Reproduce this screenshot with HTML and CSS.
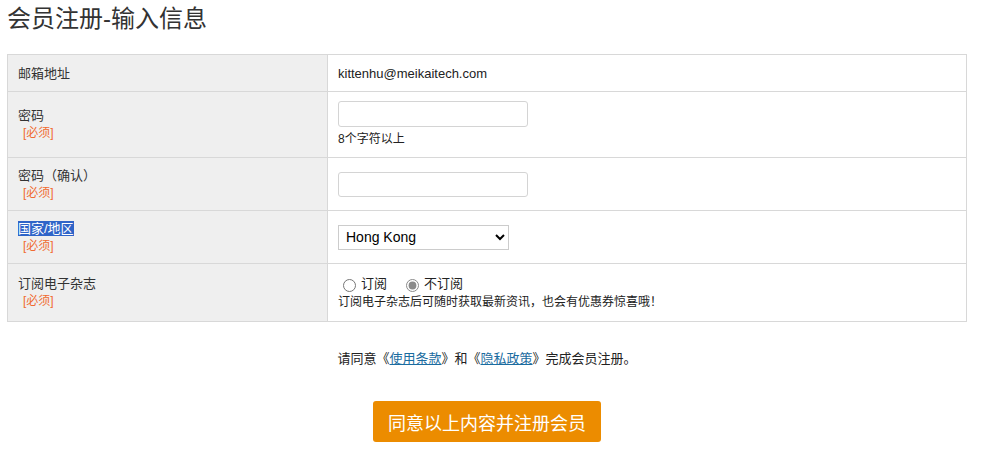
FILE: index.html
```html
<!DOCTYPE html>
<html lang="zh-CN">
<head>
    <meta charset="UTF-8">
    <meta name="viewport" content="width=device-width, initial-scale=1.0">
    <title>会员注册-输入信息</title>
    <link rel="stylesheet" href="styles.css">
</head>
<body>
    <div class="page">
        <h1 class="title">会员注册-输入信息</h1>

        <form id="register-form">
            <table class="reg-table">
                <tr class="row-email">
                    <th>邮箱地址</th>
                    <td>kittenhu@meikaitech.com</td>
                </tr>
                <tr class="row-pass">
                    <th>密码<br><span class="req">[必须]</span></th>
                    <td>
                        <input type="password" class="text-input">
                        <div class="hint">8个字符以上</div>
                    </td>
                </tr>
                <tr class="row-mid">
                    <th>密码（确认）<br><span class="req">[必须]</span></th>
                    <td><input type="password" class="text-input"></td>
                </tr>
                <tr class="row-mid">
                    <th><span class="picked">国家/地区</span><br><span class="req">[必须]</span></th>
                    <td>
                        <select class="country">
                            <option>Hong Kong</option>
                            <option>Taiwan</option>
                            <option>China</option>
                        </select>
                    </td>
                </tr>
                <tr class="row-mag">
                    <th>订阅电子杂志<br><span class="req">[必须]</span></th>
                    <td>
                        <div class="radios">
                            <label><input type="radio" name="mag"> 订阅</label>
                            <label><input type="radio" name="mag" checked> 不订阅</label>
                        </div>
                        <div class="hint">订阅电子杂志后可随时获取最新资讯，也会有优惠券惊喜哦！</div>
                    </td>
                </tr>
            </table>

            <p class="agree">请同意《<a href="#">使用条款</a>》和《<a href="#">隐私政策</a>》完成会员注册。</p>

            <div class="actions">
                <button type="submit" class="submit-btn">同意以上内容并注册会员</button>
            </div>
        </form>
    </div>
</body>
</html>
```

FILE: styles.css
```css
body {
    margin: 0;
    padding: 0;
    background-color: #fff;
    color: #333;
    font-family: Arial, "Liberation Sans", "Noto Sans CJK SC", sans-serif;
    font-size: 13px;
}
.page {
    width: 960px;
    padding: 0 7px;
}
.title {
    margin: 0;
    padding-top: 4px;
    height: 50px;
    font-size: 24px;
    font-weight: normal;
    line-height: 30px;
    color: #333;
}
.reg-table {
    width: 960px;
    border-collapse: collapse;
    border: 1px solid #d8d8d8;
}
.reg-table th,
.reg-table td {
    border: 1px solid #d8d8d8;
    vertical-align: middle;
    text-align: left;
    line-height: 17px;
}
.reg-table th {
    width: 299px;
    padding: 0 10px;
    background-color: #efefef;
    font-weight: normal;
    color: #333;
}
.reg-table td {
    padding: 0 10px;
    color: #222;
}
.row-email { height: 37px; }
.row-pass { height: 66px; }
.row-mid { height: 53px; }
.row-mag { height: 58px; }

.req {
    display: inline-block;
    margin-left: 5px;
    font-size: 12px;
    color: #f06a30;
}
.picked {
    background-color: #2f64c8;
    color: #fff;
}
.text-input {
    display: block;
    box-sizing: border-box;
    width: 190px;
    height: 26px;
    margin: 0;
    border: 1px solid #d4d4d4;
    border-radius: 3px;
    background: #fff;
}
.row-mid .text-input {
    height: 25px;
}
.hint {
    margin-top: 4px;
    font-size: 12px;
    color: #222;
}
.country {
    display: block;
    box-sizing: border-box;
    width: 171px;
    height: 25px;
    margin: 0;
    padding: 0 3px;
    border: 1px solid #ccc;
    background: #fff;
    font-family: Arial, "Liberation Sans", sans-serif;
    font-size: 14px;
    color: #000;
}
.radios {
    display: flex;
    gap: 14px;
    margin-top: 1px;
}
.radios label {
    display: flex;
    align-items: center;
    gap: 3px;
}
.radios input {
    margin: 3px 2px 0 5px;
    width: 13px;
    height: 13px;
    accent-color: #8a8a8a;
}
.row-mag .hint {
    margin-top: 2px;
}
.agree {
    margin: 28px 0 0;
    text-align: center;
    line-height: 18px;
    color: #222;
}
.agree a {
    color: #1b6ca0;
    text-decoration: underline;
}
.actions {
    display: flex;
    justify-content: center;
    margin-top: 33px;
}
.submit-btn {
    width: 228px;
    height: 41px;
    border: none;
    border-radius: 3px;
    background-color: #ec8c00;
    color: #fff;
    font-family: Arial, "Liberation Sans", "Noto Sans CJK SC", sans-serif;
    font-size: 18px;
    cursor: pointer;
}
```
